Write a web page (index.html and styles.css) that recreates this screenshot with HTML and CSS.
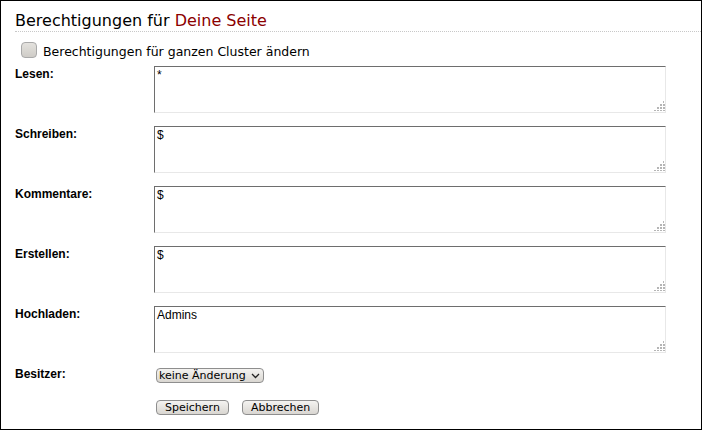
FILE: index.html
```html
<!DOCTYPE html>
<html lang="de">
<head>
<meta charset="utf-8">
<title>Berechtigungen</title>
<link rel="stylesheet" href="styles.css">
</head>
<body>
<div class="page">
  <h2 class="title">Berechtigungen für <span class="accent">Deine Seite</span></h2>
  <label class="cluster"><input type="checkbox" class="check"><span class="cluster-text">Berechtigungen für ganzen Cluster ändern</span></label>
  <div class="form">
    <div class="label">Lesen:</div>
    <div class="field"><textarea class="box">*</textarea><svg class="grip" width="12" height="12" viewBox="0 0 12 12"><g fill="#b5b5b5"><rect x="10" y="1" width="1" height="2"/><rect x="7" y="4" width="2" height="2"/><rect x="10" y="4" width="2" height="2"/><rect x="4" y="7" width="2" height="2"/><rect x="7" y="7" width="2" height="2"/><rect x="10" y="7" width="2" height="2"/><rect x="1" y="10" width="2" height="1"/><rect x="4" y="10" width="2" height="1"/><rect x="7" y="10" width="2" height="1"/><rect x="10" y="10" width="2" height="1"/></g></svg></div>

    <div class="label">Schreiben:</div>
    <div class="field"><textarea class="box">$</textarea><svg class="grip" width="12" height="12" viewBox="0 0 12 12"><g fill="#b5b5b5"><rect x="10" y="1" width="1" height="2"/><rect x="7" y="4" width="2" height="2"/><rect x="10" y="4" width="2" height="2"/><rect x="4" y="7" width="2" height="2"/><rect x="7" y="7" width="2" height="2"/><rect x="10" y="7" width="2" height="2"/><rect x="1" y="10" width="2" height="1"/><rect x="4" y="10" width="2" height="1"/><rect x="7" y="10" width="2" height="1"/><rect x="10" y="10" width="2" height="1"/></g></svg></div>

    <div class="label">Kommentare:</div>
    <div class="field"><textarea class="box">$</textarea><svg class="grip" width="12" height="12" viewBox="0 0 12 12"><g fill="#b5b5b5"><rect x="10" y="1" width="1" height="2"/><rect x="7" y="4" width="2" height="2"/><rect x="10" y="4" width="2" height="2"/><rect x="4" y="7" width="2" height="2"/><rect x="7" y="7" width="2" height="2"/><rect x="10" y="7" width="2" height="2"/><rect x="1" y="10" width="2" height="1"/><rect x="4" y="10" width="2" height="1"/><rect x="7" y="10" width="2" height="1"/><rect x="10" y="10" width="2" height="1"/></g></svg></div>

    <div class="label">Erstellen:</div>
    <div class="field"><textarea class="box">$</textarea><svg class="grip" width="12" height="12" viewBox="0 0 12 12"><g fill="#b5b5b5"><rect x="10" y="1" width="1" height="2"/><rect x="7" y="4" width="2" height="2"/><rect x="10" y="4" width="2" height="2"/><rect x="4" y="7" width="2" height="2"/><rect x="7" y="7" width="2" height="2"/><rect x="10" y="7" width="2" height="2"/><rect x="1" y="10" width="2" height="1"/><rect x="4" y="10" width="2" height="1"/><rect x="7" y="10" width="2" height="1"/><rect x="10" y="10" width="2" height="1"/></g></svg></div>

    <div class="label">Hochladen:</div>
    <div class="field"><textarea class="box">Admins</textarea><svg class="grip" width="12" height="12" viewBox="0 0 12 12"><g fill="#b5b5b5"><rect x="10" y="1" width="1" height="2"/><rect x="7" y="4" width="2" height="2"/><rect x="10" y="4" width="2" height="2"/><rect x="4" y="7" width="2" height="2"/><rect x="7" y="7" width="2" height="2"/><rect x="10" y="7" width="2" height="2"/><rect x="1" y="10" width="2" height="1"/><rect x="4" y="10" width="2" height="1"/><rect x="7" y="10" width="2" height="1"/><rect x="10" y="10" width="2" height="1"/></g></svg></div>

    <div class="label">Besitzer:</div>
    <div class="field owner"><span class="select">keine Änderung<svg class="chev" width="9" height="6" viewBox="0 0 9 6"><path d="M1 1 L4.5 4.5 L8 1" fill="none" stroke="#222" stroke-width="1.3"/></svg></span></div>

    <div class="label"></div>
    <div class="field actions"><button class="btn" type="button">Speichern</button><button class="btn" type="button">Abbrechen</button></div>
  </div>
</div>
</body>
</html>
```

FILE: styles.css
```css
html, body {
  margin: 0;
  padding: 0;
  background: #fff;
}

.page {
  box-sizing: border-box;
  width: 702px;
  height: 430px;
  border: 1px solid #000;
  font-family: "DejaVu Sans", sans-serif;
  color: #000;
}

.title {
  margin: 10px 0 0 14px;
  padding: 0 0 1px 0;
  font-size: 16px;
  line-height: 19px;
  font-weight: normal;
  border-bottom: 1px dotted #c8c8c8;
}

.accent {
  color: #8b0000;
}

.cluster {
  display: flex;
  align-items: flex-start;
  gap: 6px;
  margin: 10px 0 0 20px;
  font-size: 12.5px;
  line-height: 16px;
  height: 16px;
}

.cluster-text {
  padding-top: 2px;
}

.check {
  appearance: none;
  -webkit-appearance: none;
  margin: 0;
  width: 16px;
  height: 16px;
  border: 1px solid #a9a9a9;
  border-radius: 4px;
  background: linear-gradient(#e4e2de, #cfccc7);
  box-sizing: border-box;
}

.form {
  display: grid;
  grid-template-columns: 139px 512px;
  row-gap: 13px;
  margin: 8px 0 0 14px;
}

.label {
  font-family: "Liberation Sans", Arial, sans-serif;
  font-weight: bold;
  font-size: 12px;
  line-height: 14px;
  padding-top: 1px;
}

.field {
  position: relative;
  height: 47px;
}

.box {
  display: block;
  box-sizing: border-box;
  width: 512px;
  height: 47px;
  margin: 0;
  padding: 1px 2px;
  border: 1px solid;
  border-color: #6e6e6e #e8e8e8 #e8e8e8 #6e6e6e;
  font-family: "Liberation Sans", Arial, sans-serif;
  font-size: 12px;
  line-height: 14px;
  color: #000;
  resize: none;
  background: #fff;
  outline: none;
}

.grip {
  position: absolute;
  right: 1px;
  bottom: 1px;
}

.field.owner {
  display: flex;
  align-items: flex-start;
  height: 15px;
  padding-top: 2px;
}

.select {
  display: inline-flex;
  align-items: center;
  gap: 5px;
  box-sizing: border-box;
  height: 15px;
  margin-left: 2px;
  padding: 0 3px 0 2px;
  border: 1px solid #8e8e8e;
  border-radius: 4px;
  background: linear-gradient(#f4f3f1, #d9d6d1);
  font-family: "DejaVu Sans", sans-serif;
  font-size: 11px;
  line-height: 13px;
}

.field.actions {
  height: 16px;
  display: flex;
  align-items: flex-start;
  gap: 11px;
  padding-top: 4px;
}

.btn {
  box-sizing: border-box;
  height: 15px;
  margin: 0 0 0 2px;
  padding: 0 8px;
  border: 1px solid #8e8e8e;
  border-radius: 4px;
  background: linear-gradient(#f4f3f1, #d9d6d1);
  font-family: "DejaVu Sans", sans-serif;
  font-size: 11px;
  line-height: 13px;
  color: #000;
}
```
